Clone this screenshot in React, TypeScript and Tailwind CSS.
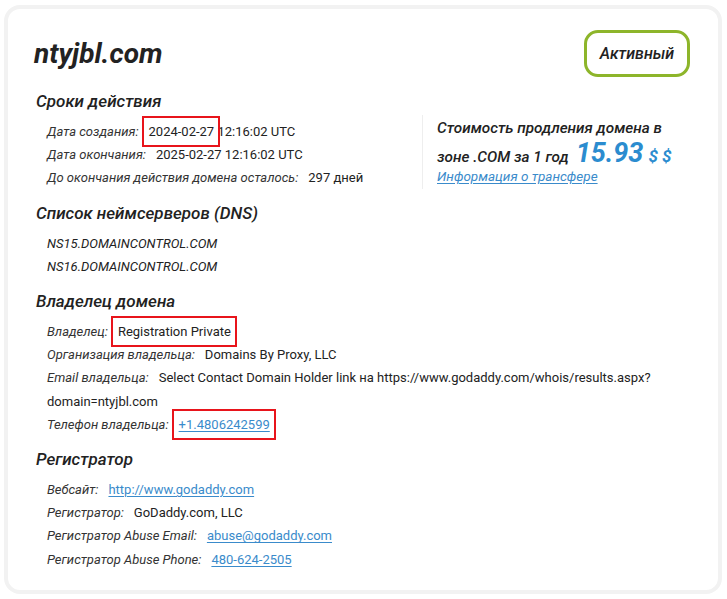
import type { ReactNode } from "react";

const font = { fontFamily: "Roboto, 'Liberation Sans', sans-serif" };

function Mark({ children }: { children: ReactNode }) {
  return (
    <span className="relative">
      {children}
      <span className="pointer-events-none absolute -top-[8px] -bottom-[8px] -left-[7px] -right-[6px] border-2 border-[#e8141b]" />
    </span>
  );
}

function Row({ label, children }: { label: string; children: ReactNode }) {
  return (
    <div className="leading-[23.2px]">
      <span className="italic text-[#333]">{label}</span>
      <span className="ml-[10px] text-[#222]">{children}</span>
    </div>
  );
}

function Heading({ children, top = "mt-[11px]" }: { children: ReactNode; top?: string }) {
  return <h2 className={`${top} mb-[7px] text-[17px] font-medium italic leading-6 text-[#222]`}>{children}</h2>;
}

function A({ children }: { children: ReactNode }) {
  return <a className="text-[#3a8bcb] underline underline-offset-2">{children}</a>;
}

export default function App() {
  return (
    <div className="min-h-screen bg-white p-1 pt-[5px]" style={font}>
      <section className="h-[589px] w-[718px] rounded-2xl border-4 border-[#f2f2f2] bg-white pl-[28px] pr-7 pt-[21px]">
        <header className="flex items-center justify-between">
          <h1 className="-ml-[2px] text-[28px] font-bold italic leading-none text-[#222]">ntyjbl.com</h1>
          <span className="flex h-[47px] w-[106px] items-center justify-center rounded-[14px] border-[3px] border-[#8db52a] text-[16px] font-medium italic text-[#222]">
            Активный
          </span>
        </header>

        <div className="flex items-start">
          <div className="flex-1">
            <Heading top="mt-[12px]">Сроки действия</Heading>
            <div className="pl-[11px] text-[13px]">
              <Row label="Дата создания:">
                <Mark>2024-02-27</Mark> 12:16:02 UTC
              </Row>
              <Row label="Дата окончания:">2025-02-27 12:16:02 UTC</Row>
              <Row label="До окончания действия домена осталось:">297 дней</Row>
            </div>
          </div>
          <div className="mt-[38px] h-[74px] w-[268px] border-l border-[#eeeeee] pl-[14px] text-[15.3px] font-medium italic text-[#222]">
            <div className="mt-[1px] leading-6">Стоимость продления домена в</div>
            <div className="flex h-6 items-baseline">
              <span>зоне .COM за 1 год</span>
              <span className="ml-[7px] text-[27px] font-bold leading-none text-[#2b8ccf]">15.93</span>
              <span className="ml-[5px] text-[17px] font-bold leading-none text-[#2b8ccf]">$ $</span>
            </div>
            <div className="leading-6">
              <a className="text-[13.5px] font-normal text-[#3a8bcb] underline underline-offset-2">Информация о трансфере</a>
            </div>
          </div>
        </div>

        <Heading>Список неймсерверов (DNS)</Heading>
        <div className="pl-[11px] text-[13px] italic leading-[23.2px] text-[#222]">
          <div>NS15.DOMAINCONTROL.COM</div>
          <div>NS16.DOMAINCONTROL.COM</div>
        </div>

        <Heading>Владелец домена</Heading>
        <div className="pl-[11px] text-[13px]">
          <Row label="Владелец:">
            <Mark>Registration Private</Mark>
          </Row>
          <Row label="Организация владельца:">Domains By Proxy, LLC</Row>
          <Row label="Email владельца:">
            Select Contact Domain Holder link на https://www.godaddy.com/whois/results.aspx?<wbr />domain=ntyjbl.com
          </Row>
          <Row label="Телефон владельца:">
            <Mark>
              <A>+1.4806242599</A>
            </Mark>
          </Row>
        </div>

        <Heading>Регистратор</Heading>
        <div className="pl-[11px] text-[13px]">
          <Row label="Вебсайт:">
            <A>http://www.godaddy.com</A>
          </Row>
          <Row label="Регистратор:">GoDaddy.com, LLC</Row>
          <Row label="Регистратор Abuse Email:">
            <A>abuse@godaddy.com</A>
          </Row>
          <Row label="Регистратор Abuse Phone:">
            <A>480-624-2505</A>
          </Row>
        </div>
      </section>
    </div>
  );
}
